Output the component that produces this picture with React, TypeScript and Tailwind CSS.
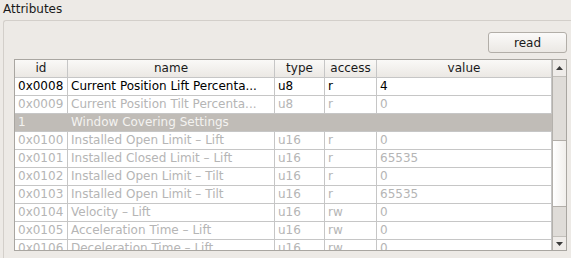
import React from 'react';

type Row = { id: string; name: string; type: string; access: string; value: string; enabled?: boolean };

const rows: Row[] = [
   { id: '0x0008', name: 'Current Position Lift Percenta...', type: 'u8', access: 'r', value: '4', enabled: true },
   { id: '0x0009', name: 'Current Position Tilt Percenta...', type: 'u8', access: 'r', value: '0' },
];

const rows2: Row[] = [
   { id: '0x0100', name: 'Installed Open Limit – Lift', type: 'u16', access: 'r', value: '0' },
   { id: '0x0101', name: 'Installed Closed Limit – Lift', type: 'u16', access: 'r', value: '65535' },
   { id: '0x0102', name: 'Installed Open Limit – Tilt', type: 'u16', access: 'r', value: '0' },
   { id: '0x0103', name: 'Installed Open Limit – Tilt', type: 'u16', access: 'r', value: '65535' },
   { id: '0x0104', name: 'Velocity – Lift', type: 'u16', access: 'rw', value: '0' },
   { id: '0x0105', name: 'Acceleration Time – Lift', type: 'u16', access: 'rw', value: '0' },
   { id: '0x0106', name: 'Deceleration Time – Lift', type: 'u16', access: 'rw', value: '0' },
];

const cols = 'grid grid-cols-[53px_207px_50px_52px_175px]';

const DataRow: React.FC<{ r: Row }> = ({ r }) => {
   const tone = r.enabled ? 'text-black' : 'text-[#b5b5b5]';
   const cell = 'h-[18px] border-r border-b border-[#c6c6c6] pl-[3px] leading-[17px] whitespace-nowrap overflow-hidden';
   return (
      <div className={`${cols} bg-white ${tone}`}>
         <div className={cell}>{r.id}</div>
         <div className={cell}>{r.name}</div>
         <div className={cell}>{r.type}</div>
         <div className={cell}>{r.access}</div>
         <div className={cell}>{r.value}</div>
      </div>
   );
};

const App: React.FC = () => {
   const head = 'h-[18px] border-r border-b border-[#c6c6c6] text-center leading-[17px] bg-gradient-to-b from-[#faf9f7] to-[#ebe8e4] text-[#1a1a1a]';
   return (
      <div className="w-[571px] h-[258px] overflow-hidden bg-[#edeae6] text-[12px] font-['DejaVu_Sans',sans-serif] text-black">
         <div className="h-[20px] pl-[3px] pt-[1px] leading-[16px] text-[#1a1a1a]">Attributes</div>

         <div className="ml-[3px] h-[250px] border-l border-t border-[#d3cfca] rounded-tl-[3px] bg-[#edeae6] pt-[11px] pl-[10px]">
            <div className="flex justify-end pr-[4px]">
               <button className="w-[79px] h-[21px] rounded-[3px] border border-[#b2aea8] bg-gradient-to-b from-[#fbfaf9] to-[#ebe8e4] text-[12px] leading-[18px] text-[#1a1a1a]">read</button>
            </div>

            <div className="mt-[6px] w-[553px] h-[192px] flex border border-[#a9a6a1] bg-white overflow-hidden">
               <div className="w-[537px]">
                  <div className={cols}>
                     <div className={head}>id</div>
                     <div className={head}>name</div>
                     <div className={head}>type</div>
                     <div className={head}>access</div>
                     <div className={head}>value</div>
                  </div>
                  {rows.map(r => <DataRow key={r.id} r={r} />)}
                  <div className="flex h-[18px] border-b border-[#c6c6c6] bg-[#c0bcb7] text-[#f4f3f1] leading-[17px]">
                     <span className="w-[53px] pl-[3px]">1</span>
                     <span className="pl-[3px]">Window Covering Settings</span>
                  </div>
                  {rows2.map(r => <DataRow key={r.id} r={r} />)}
               </div>

               <div className="w-[14px] flex flex-col border-l border-[#b4b1ac] bg-[#dfdcd8]">
                  <div className="h-[17px] flex items-center justify-center bg-[#efece9] border-b border-[#c2bfba]">
                     <svg width="7" height="4" viewBox="0 0 7 4"><polygon points="0,4 3.5,0 7,4" fill="#3a3a3a" /></svg>
                  </div>
                  <div className="h-[63px]" />
                  <div className="h-[67px] border-y border-[#b2aea9] bg-gradient-to-r from-[#ffffff] to-[#f1efec]" />
                  <div className="flex-1" />
                  <div className="h-[14px] flex items-center justify-center bg-[#efece9] border-t border-[#c2bfba]">
                     <svg width="7" height="4" viewBox="0 0 7 4"><polygon points="0,0 7,0 3.5,4" fill="#3a3a3a" /></svg>
                  </div>
               </div>
            </div>
         </div>
      </div>
   );
};

export default App;
